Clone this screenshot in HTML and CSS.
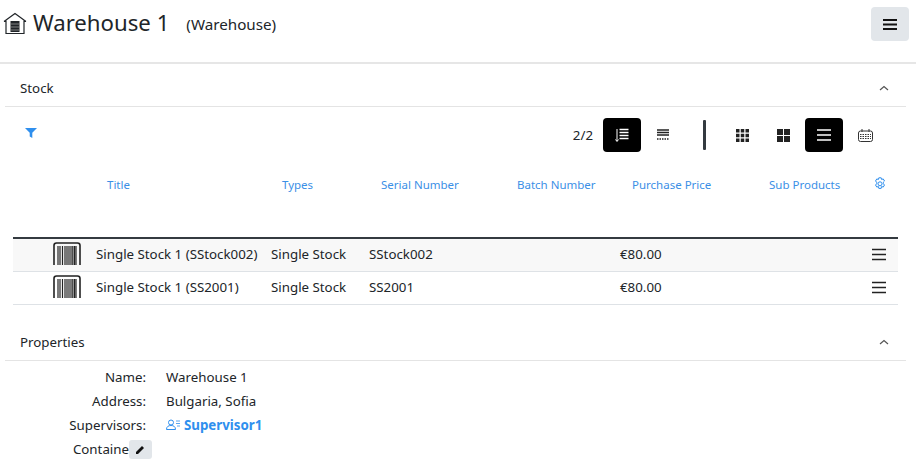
FILE: index.html
```html
<!DOCTYPE html>
<html lang="en">
<head>
<meta charset="utf-8">
<title>Warehouse 1</title>
<link rel="stylesheet" href="styles.css">
</head>
<body>
<header class="page-head">
  <svg class="house" width="24" height="24" viewBox="0 0 24 24" fill="none" stroke="#212529" stroke-width="1.200"><path d="M1 10.500 12 2.500l11 8"/><path d="M3 9.500V22.500H21V9.500"/><path d="M1 10.500h2M21 10.500h2"/><rect x="7.500" y="10" width="9" height="11" fill="#212529" stroke="none"/><path d="M7.500 13h9M7.500 16h9M7.500 19h9" stroke="#999" stroke-width=".8"/></svg>
  <h1 class="title">Warehouse 1</h1>
  <span class="subtitle">(Warehouse)</span>
  <button class="menu-btn" aria-label="Menu"><svg width="14" height="13" viewBox="0 0 14 13" stroke="#111" stroke-width="2"><path d="M0 2h14M0 6.500h14M0 11h14"/></svg></button>
</header>

<section class="panel">
  <div class="panel-head"><span>Stock</span><svg class="chev" width="10" height="6" viewBox="0 0 10 6" fill="none" stroke="#555" stroke-width="1.200"><path d="M1 5 5 1.500 9 5"/></svg></div>
  <div class="toolbar">
    <svg class="filter" width="12" height="10" viewBox="0 0 12 10" fill="#2f8fee"><path d="M0 0h12L7.300 4.800V10L4.700 8.400V4.800z"/></svg>
    <div class="tools">
      <span class="count">2/2</span>
      <button class="tool on"><svg width="14" height="14" viewBox="0 0 14 14" stroke="#fff" fill="none"><path d="M4.500 1.500h9M4.500 4.500h9M4.500 7.500h9M4.500 10.500h9" stroke-width="1.300"/><path d="M2 1v12M.5 11.500 2 13.500l1.500-2"/></svg></button>
      <button class="tool"><svg width="12" height="12" viewBox="0 0 12 12" stroke="#222" fill="none"><path d="M0 1h12M0 3.500h12M0 6h12" stroke-width="1.300"/><path d="M0 10h12" stroke-dasharray="1.500 1" stroke-width="1.600"/></svg></button>
      <span class="divider"></span>
      <button class="tool"><svg width="13" height="13" viewBox="0 0 13 13" fill="#222"><path d="M0 0h3.500v3.500H0zM4.750 0h3.500v3.500h-3.500zM9.500 0H13v3.500H9.500zM0 4.750h3.500v3.500H0zM4.750 4.750h3.500v3.500h-3.500zM9.500 4.750H13v3.500H9.500zM0 9.500h3.500V13H0zM4.750 9.500h3.500V13h-3.500zM9.500 9.500H13V13H9.500z"/></svg></button>
      <button class="tool"><svg width="13" height="13" viewBox="0 0 13 13" fill="#222"><path d="M0 0h6v6H0zM7 0h6v6H7zM0 7h6v6H0zM7 7h6v6H7z"/></svg></button>
      <button class="tool on"><svg width="14" height="12" viewBox="0 0 14 12" stroke="#fff" stroke-width="1.500"><path d="M0 1h14M0 6h14M0 11h14"/></svg></button>
      <button class="tool"><svg width="15" height="13" viewBox="0 0 15 13" fill="none" stroke="#333"><rect x=".5" y="2" width="14" height="10.500" rx="2"/><path d="M4 0v3M11 0v3"/><path d="M2 5.500h11M2 7.500h11M2 9.500h11" stroke-dasharray="1.500 1"/></svg></button>
    </div>
  </div>
  <div class="cols heads">
    <span></span><span>Title</span><span>Types</span><span>Serial Number</span><span>Batch Number</span><span>Purchase Price</span><span>Sub Products</span>
    <svg class="gear" width="14" height="14" viewBox="0 0 14 14" fill="none" stroke="#2f8fee"><path d="M5.800.8h2.400l.4 1.700 1.600-.6 1.300 2.100-1.200 1.200v1.600l1.200 1.200-1.300 2.100-1.600-.6-.4 1.700v.2H5.800l-.4-1.900-1.600.6-1.300-2.100 1.200-1.200V5.200L2.500 4l1.300-2.100 1.600.6z"/><circle cx="7" cy="6.800" r="2"/></svg>
  </div>
  <div class="rows">
    <div class="cols row odd">
      <svg class="barcode" width="28" height="24" viewBox="0 0 28 24"><use href="#bc"/></svg>
      <span class="cell">Single Stock 1 (SStock002)</span><span class="cell">Single Stock</span><span class="cell">SStock002</span><span></span><span class="cell">€80.00</span><span></span>
      <svg class="row-menu" width="14" height="13" viewBox="0 0 14 13" stroke="#222" stroke-width="1.500"><path d="M0 1.500h14M0 6.500h14M0 11.500h14"/></svg>
    </div>
    <div class="cols row">
      <svg class="barcode" width="28" height="24" viewBox="0 0 28 24"><use href="#bc"/></svg>
      <span class="cell">Single Stock 1 (SS2001)</span><span class="cell">Single Stock</span><span class="cell">SS2001</span><span></span><span class="cell">€80.00</span><span></span>
      <svg class="row-menu" width="14" height="13" viewBox="0 0 14 13" stroke="#222" stroke-width="1.500"><path d="M0 1.500h14M0 6.500h14M0 11.500h14"/></svg>
    </div>
  </div>
</section>

<section class="panel props">
  <div class="panel-head"><span>Properties</span><svg class="chev" width="10" height="6" viewBox="0 0 10 6" fill="none" stroke="#555" stroke-width="1.200"><path d="M1 5 5 1.500 9 5"/></svg></div>
  <dl class="prop-list">
    <dt>Name:</dt><dd>Warehouse 1</dd>
    <dt>Address:</dt><dd>Bulgaria, Sofia</dd>
    <dt>Supervisors:</dt><dd><a class="link" href="#"><svg width="14" height="11" viewBox="0 0 14 11" fill="none" stroke="#2f8fee"><circle cx="5" cy="3.500" r="2.500"/><path d="M.5 10.500c0-3 2-4 4.500-4s4.500 1 4.500 4z"/><path d="M10 2h4M10 4.500h4M11 7h3" stroke-width=".8"/></svg>Supervisor1</a></dd>
    <dt class="clip">Containe<button class="edit" aria-label="Edit"><svg width="9" height="9" viewBox="0 0 9 9" fill="#111"><path d="M0 9V7L6 1l2 2-6 6z"/></svg></button></dt><dd></dd>
  </dl>
</section>

<svg class="defs" width="0" height="0"><defs><g id="bc"><path d="M1 23V3.500Q1 1 3.500 1h21Q27 1 27 3.500V23" fill="none" stroke="#222" stroke-width="1.600"/><path d="M5 4v19M7 4v19M9.500 4v19M12 4v19M14 4v19M16 4v19M18 4v19M19.800 4v19M21.500 4v19M23 4v19" stroke="#222" stroke-width="1.200"/></g></defs></svg>
</body>
</html>
```
FILE: styles.css
```css
* { box-sizing: border-box; }
html, body { height: 100%; }
body {
  margin: 0;
  height: 472px;
  overflow: hidden;
  background: #fff;
  color: #212529;
  font-family: "Noto Sans", "Open Sans", sans-serif;
  font-size: 13.3px;
  line-height: 20px;
}
button { border: 0; padding: 0; font: inherit; cursor: pointer; }
svg { display: block; flex: none; }

.page-head {
  height: 64px;
  display: flex;
  align-items: flex-start;
  padding: 6px 7px 0 3px;
  border-bottom: 2px solid #e6e6e6;
}
.house { margin-top: 5px; }
.title {
  margin: 0 0 0 6px;
  font-size: 22.200px;
  font-weight: 400;
  line-height: 33px;
}
.subtitle { margin: 8px 0 0 17px; font-size: 15.200px; line-height: 20px; }
.menu-btn {
  margin: 1px 0 0 auto;
  width: 38px;
  height: 34px;
  background: #e2e6ea;
  border-radius: 4px;
  display: flex;
  align-items: center;
  justify-content: center;
}

.panel { margin: 0 10px 0 5px; }
.panel-head {
  height: 43px;
  display: flex;
  align-items: center;
  justify-content: space-between;
  padding: 5px 17px 0 15px;
  border-bottom: 1px solid #e4e4e4;
}
.toolbar {
  height: 45px;
  padding: 11px 0 0 20px;
  display: flex;
  justify-content: space-between;
  align-items: flex-start;
}
.filter { margin-top: 10px; }
.tools { display: flex; align-items: center; margin-right: 19px; }
.count { margin-right: 10px; }
.tool {
  width: 38px;
  height: 34px;
  margin-right: 3px;
  border-radius: 4px;
  background: transparent;
  display: flex;
  align-items: center;
  justify-content: center;
}
.tool.on { background: #000; }
.divider { width: 3px; height: 30px; background: #343a40; margin: 0 17px 0 18px; border-radius: 1px; }

.cols { display: grid; align-items: center; }
.heads {
  height: 85px;
  margin: 0 0 0 8px;
  padding-bottom: 19px;
  color: #3b8fe6;
  font-size: 11.500px;
  grid-template-columns: 94px 175px 99px 136px 115px 137px 104px 1fr;
}
.gear { justify-self: start; margin-top: -2px; }
.rows { margin: 0 8px 0 8px; border-top: 2px solid #343a40; }
.row {
  height: 33px;
  padding-left: 3px;
  border-bottom: 1px solid #dee2e6;
  grid-template-columns: 80px 175px 98px 136px 115px 137px 115px 1fr;
}
.row.odd { background: #f8f8f8; }
.cell { margin-top: -2px; }
.barcode { justify-self: end; margin-right: 15px; align-self: start; margin-top: 3px; }
.row-menu { justify-self: start; margin-top: -2px; }

.props { margin-top: 13px; }
.prop-list {
  margin: 4px 0 0;
  display: grid;
  grid-template-columns: 141px 1fr;
  column-gap: 20px;
  grid-auto-rows: 24px;
  align-items: center;
}
.prop-list dt { text-align: right; }
.prop-list dd { margin: 0; }
.clip { display: flex; justify-content: flex-end; align-items: center; margin-right: -6px; }
.edit {
  width: 23px;
  height: 19px;
  background: #e2e6ea;
  border-radius: 3px;
  display: flex;
  align-items: center;
  justify-content: center;
}
.link { color: #2f8fee; font-weight: 700; text-decoration: none; display: inline-flex; align-items: center; gap: 4px; }
.defs { position: absolute; }
```
